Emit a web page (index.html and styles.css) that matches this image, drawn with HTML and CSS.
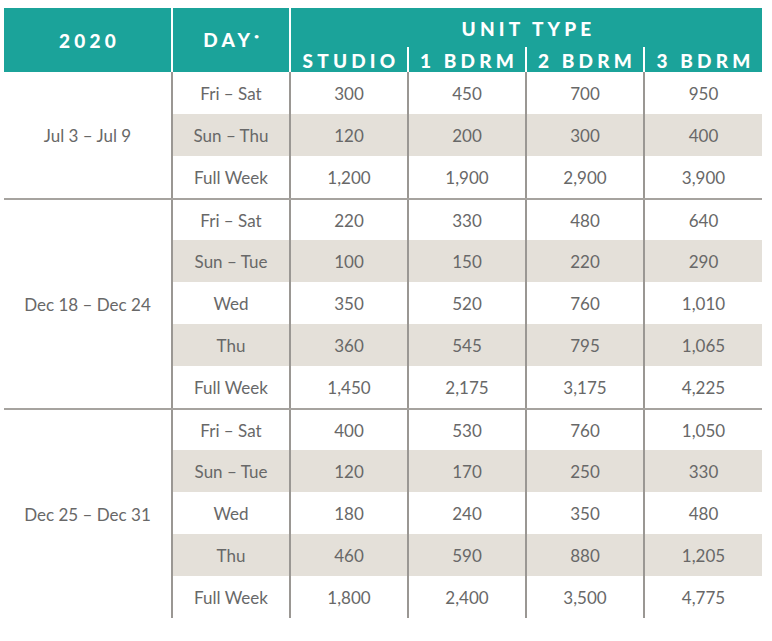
FILE: index.html
```html
<!DOCTYPE html>
<html lang="en">
<head>
<meta charset="utf-8">
<title>2020 Unit Type Rates</title>
<link rel="stylesheet" href="styles.css">
</head>
<body>
<div class="sheet">
  <div class="head">
    <div class="h-year">2020</div>
    <div class="h-day">DAY<span class="mark">•</span></div>
    <div class="h-unit">UNIT TYPE</div>
    <div class="h-sub first">STUDIO</div>
    <div class="h-sub">1 BDRM</div>
    <div class="h-sub">2 BDRM</div>
    <div class="h-sub">3 BDRM</div>
  </div>

  <div class="group">
    <div class="period">Jul 3 – Jul 9</div>
    <div class="rows">
      <div class="row"><div class="c">Fri – Sat</div><div class="c">300</div><div class="c">450</div><div class="c">700</div><div class="c">950</div></div>
      <div class="row alt"><div class="c">Sun – Thu</div><div class="c">120</div><div class="c">200</div><div class="c">300</div><div class="c">400</div></div>
      <div class="row"><div class="c">Full Week</div><div class="c">1,200</div><div class="c">1,900</div><div class="c">2,900</div><div class="c">3,900</div></div>
    </div>
  </div>

  <div class="group sep">
    <div class="period">Dec 18 – Dec 24</div>
    <div class="rows">
      <div class="row"><div class="c">Fri – Sat</div><div class="c">220</div><div class="c">330</div><div class="c">480</div><div class="c">640</div></div>
      <div class="row alt"><div class="c">Sun – Tue</div><div class="c">100</div><div class="c">150</div><div class="c">220</div><div class="c">290</div></div>
      <div class="row"><div class="c">Wed</div><div class="c">350</div><div class="c">520</div><div class="c">760</div><div class="c">1,010</div></div>
      <div class="row alt"><div class="c">Thu</div><div class="c">360</div><div class="c">545</div><div class="c">795</div><div class="c">1,065</div></div>
      <div class="row"><div class="c">Full Week</div><div class="c">1,450</div><div class="c">2,175</div><div class="c">3,175</div><div class="c">4,225</div></div>
    </div>
  </div>

  <div class="group sep">
    <div class="period">Dec 25 – Dec 31</div>
    <div class="rows">
      <div class="row"><div class="c">Fri – Sat</div><div class="c">400</div><div class="c">530</div><div class="c">760</div><div class="c">1,050</div></div>
      <div class="row alt"><div class="c">Sun – Tue</div><div class="c">120</div><div class="c">170</div><div class="c">250</div><div class="c">330</div></div>
      <div class="row"><div class="c">Wed</div><div class="c">180</div><div class="c">240</div><div class="c">350</div><div class="c">480</div></div>
      <div class="row alt"><div class="c">Thu</div><div class="c">460</div><div class="c">590</div><div class="c">880</div><div class="c">1,205</div></div>
      <div class="row"><div class="c">Full Week</div><div class="c">1,800</div><div class="c">2,400</div><div class="c">3,500</div><div class="c">4,775</div></div>
    </div>
  </div>
</div>
</body>
</html>
```

FILE: styles.css
```css
html, body {
  margin: 0;
  padding: 0;
  background: #ffffff;
}

body {
  font-family: "Lato", "Liberation Sans", sans-serif;
}

.sheet {
  width: 758px;
  margin: 8px 0 0 4px;
}

/* ---------- header ---------- */
.head {
  display: grid;
  grid-template-columns: 167px 118px 118px 118px 118px 119px;
  grid-template-rows: 39px 25px;
  background: #1ba39a;
  color: #ffffff;
  font-weight: 900;
  font-size: 19px;
  letter-spacing: 0.22em;
}

.head > div {
  display: flex;
  align-items: center;
  justify-content: center;
  box-sizing: border-box;
  line-height: 1;
}

.h-year {
  grid-row: 1 / 3;
  grid-column: 1;
  padding-left: 4px;
}

.h-day {
  grid-row: 1 / 3;
  grid-column: 2;
  border-left: 2px solid #ffffff;
  padding-left: 0;
  padding-bottom: 2px;
}

.mark {
  font-size: 8px;
  letter-spacing: 0;
  align-self: flex-start;
  margin-top: 24px;
}

.h-unit {
  grid-row: 1;
  grid-column: 3 / 7;
  border-left: 2px solid #ffffff;
  padding-top: 2px;
  padding-left: 4px;
}

.h-sub {
  grid-row: 2;
  border-left: 2px solid #ffffff;
  padding-left: 4px;
  padding-top: 2px;
}

/* ---------- body ---------- */
.group {
  display: flex;
  color: #686868;
  font-size: 17px;
}

.group.sep {
  border-top: 2px solid #a6a39f;
}

.period {
  width: 167px;
  display: flex;
  align-items: center;
  justify-content: center;
  flex: none;
}

.rows {
  display: flex;
  flex-direction: column;
  width: 591px;
}

.row {
  display: grid;
  grid-template-columns: 118px 118px 118px 118px 119px;
  height: 42px;
}

.group.sep .row:first-child {
  height: 40px;
}

.row.alt {
  background: #e4e0d9;
}

.c {
  box-sizing: border-box;
  border-left: 2px solid #9a9793;
  display: flex;
  align-items: center;
  justify-content: center;
}
```
